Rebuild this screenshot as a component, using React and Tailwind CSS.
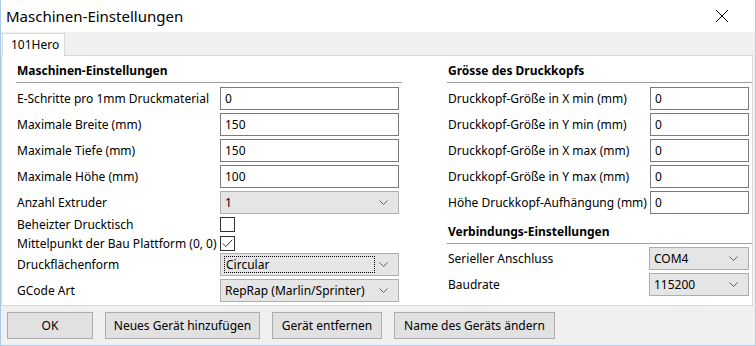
import React from "react";

const font = { fontFamily: '"Noto Sans", "Liberation Sans", sans-serif' };

function Chevron() {
  return (
    <svg width="9" height="5" viewBox="0 0 9 5" className="shrink-0">
      <path d="M0.5 0.5 L4.5 4.5 L8.5 0.5" fill="none" stroke="#606060" strokeWidth="1" />
    </svg>
  );
}

function TextBox({ value, w }) {
  return (
    <div className={`h-[23px] ${w} border border-[#7a7a7a] bg-white flex items-center pl-[4px] text-[12px] text-black`}>
      {value}
    </div>
  );
}

function Combo({ value, w, focus }) {
  return (
    <div className={`h-[23px] ${w} border border-[#adadad] bg-[#e5e5e5] flex items-center justify-between pl-[3px] pr-[10px] text-[12px] text-black`}>
      {focus ? (
        <div className="h-[17px] w-[151px] border border-dotted border-black flex items-center pl-[1px]">{value}</div>
      ) : (
        <div className="pl-[1px]">{value}</div>
      )}
      <Chevron />
    </div>
  );
}

function CheckBox({ checked }) {
  return (
    <div className="w-[15px] h-[15px] border border-[#333333] bg-white flex items-center justify-center">
      {checked && (
        <svg width="11" height="9" viewBox="0 0 11 9">
          <path d="M0.8 4.5 L3.8 7.6 L10.2 0.8" fill="none" stroke="#333333" strokeWidth="1" />
        </svg>
      )}
    </div>
  );
}

function Header({ children, className = "" }) {
  return (
    <div className={`h-[27px] flex flex-col justify-end ${className}`}>
      <div className="text-[12px] font-bold leading-[16px] pl-[1px] pb-[3px] border-b border-[#a0a0a0]">{children}</div>
    </div>
  );
}

function Row({ label, labelW, children }) {
  return (
    <div className="flex items-center h-[23px]">
      <div className={`${labelW} pl-[1px] text-[12px] whitespace-nowrap`}>{label}</div>
      {children}
    </div>
  );
}

function Button({ children, w }) {
  return (
    <div className={`h-[27px] ${w} border border-[#adadad] bg-[#e1e1e1] flex items-center justify-center text-[12px] text-black`}>
      {children}
    </div>
  );
}

export default function App() {
  return (
    <div style={font} className="w-[756px] h-[346px] bg-[#f0f0f0] text-black border-x border-b border-[#a9cbe7] flex flex-col overflow-hidden">
      <div className="h-[32px] bg-white flex items-center justify-between pl-[5px] pr-[26px] shrink-0">
        <div className="text-[15px] leading-none">Maschinen-Einstellungen</div>
        <svg width="14" height="14" viewBox="0 0 14 14">
          <path d="M1 1 L13 13 M13 1 L1 13" stroke="#000" strokeWidth="1" />
        </svg>
      </div>
      <div className="h-[23px] flex items-end pl-[1px] shrink-0">
        <div className="h-[23px] w-[63px] bg-white border-x border-t border-[#d9d9d9] flex items-center pl-[8px] text-[12px] -mb-[1px] relative z-10">
          101Hero
        </div>
      </div>
      <div className="h-[251px] mr-[2px] bg-white border border-[#d9d9d9] flex pl-[14px] shrink-0">
        <div className="w-[386px] flex flex-col">
          <Header>Maschinen-Einstellungen</Header>
          <div className="flex flex-col gap-[3px] mt-[4px]">
            <Row label="E-Schritte pro 1mm Druckmaterial" labelW="w-[204px]"><TextBox value="0" w="w-[179px]" /></Row>
            <Row label="Maximale Breite (mm)" labelW="w-[204px]"><TextBox value="150" w="w-[179px]" /></Row>
            <Row label="Maximale Tiefe (mm)" labelW="w-[204px]"><TextBox value="150" w="w-[179px]" /></Row>
            <Row label="Maximale Höhe (mm)" labelW="w-[204px]"><TextBox value="100" w="w-[179px]" /></Row>
            <Row label="Anzahl Extruder" labelW="w-[204px]"><Combo value="1" w="w-[179px]" /></Row>
          </div>
          <div className="flex items-center h-[15px] mt-[3px]">
            <div className="w-[204px] pl-[1px] text-[12px] whitespace-nowrap">Beheizter Drucktisch</div>
            <CheckBox />
          </div>
          <div className="flex items-center h-[15px] mt-[4px]">
            <div className="w-[204px] pl-[1px] text-[12px] whitespace-nowrap">Mittelpunkt der Bau Plattform (0, 0)</div>
            <CheckBox checked />
          </div>
          <div className="flex flex-col gap-[3px] mt-[2px]">
            <Row label="Druckflächenform" labelW="w-[204px]"><Combo value="Circular" w="w-[179px]" focus /></Row>
            <Row label="GCode Art" labelW="w-[204px]"><Combo value="RepRap (Marlin/Sprinter)" w="w-[179px]" /></Row>
          </div>
        </div>
        <div className="w-[305px] ml-[45px] flex flex-col">
          <Header>Grösse des Druckkopfs</Header>
          <div className="flex flex-col gap-[3px] mt-[4px]">
            <Row label="Druckkopf-Größe in X min (mm)" labelW="w-[203px]"><TextBox value="0" w="w-[99px]" /></Row>
            <Row label="Druckkopf-Größe in Y min (mm)" labelW="w-[203px]"><TextBox value="0" w="w-[99px]" /></Row>
            <Row label="Druckkopf-Größe in X max (mm)" labelW="w-[203px]"><TextBox value="0" w="w-[99px]" /></Row>
            <Row label="Druckkopf-Größe in Y max (mm)" labelW="w-[203px]"><TextBox value="0" w="w-[99px]" /></Row>
            <Row label="Höhe Druckkopf-Aufhängung (mm)" labelW="w-[203px]"><TextBox value="0" w="w-[99px]" /></Row>
          </div>
          <Header className="mt-[3px]">Verbindungs-Einstellungen</Header>
          <div className="flex flex-col gap-[3px] mt-[3px]">
            <Row label="Serieller Anschluss" labelW="w-[202px]"><Combo value="COM4" w="w-[100px]" /></Row>
            <Row label="Baudrate" labelW="w-[202px]"><Combo value="115200" w="w-[100px]" /></Row>
          </div>
        </div>
      </div>
      <div className="flex items-center gap-[12px] pl-[6px] pt-[6px]">
        <Button w="w-[86px]">OK</Button>
        <Button w="w-[155px]">Neues Gerät hinzufügen</Button>
        <Button w="w-[110px]">Gerät entfernen</Button>
        <Button w="w-[161px]">Name des Geräts ändern</Button>
      </div>
    </div>
  );
}
